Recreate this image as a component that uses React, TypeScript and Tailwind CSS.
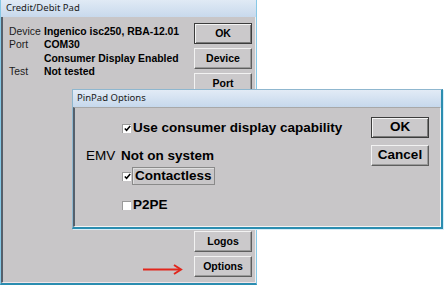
import React from 'react';

const font = { fontFamily: '"Liberation Sans", Arial, sans-serif' };

function Btn({ label, primary, big }: { label: string; primary?: boolean; big?: boolean }) {
  return (
    <div
      className={
        'flex items-center justify-center bg-[#cbc9cb] font-bold text-black ' +
        (big ? 'w-[58px] h-[21px] text-[13.5px] ' : 'w-[58px] h-[21px] text-[10.5px] ') +
        (primary
          ? 'border border-[#3c3c3c] shadow-[inset_1px_1px_0_#f4f4f4,inset_-1px_-1px_0_#7a7a7a]'
          : 'border border-t-[#f2f2f2] border-l-[#f2f2f2] border-r-[#5e5e5e] border-b-[#5e5e5e] shadow-[inset_-1px_-1px_0_#9a9a9a]')
      }
    >
      {label}
    </div>
  );
}

function Check({ checked }: { checked?: boolean }) {
  return (
    <span className="flex items-center justify-center w-[9px] h-[9px] bg-white border-t border-l border-[#9a9a9a] shrink-0">
      {checked && (
        <svg width="7" height="7" viewBox="0 0 7 7">
          <path d="M0.8 3.4 L2.6 5.3 L6.2 1" stroke="#000" strokeWidth="1.5" fill="none" />
        </svg>
      )}
    </span>
  );
}

export default function App() {
  const rows = [
    { label: 'Device', value: 'Ingenico isc250, RBA-12.01' },
    { label: 'Port', value: 'COM30' },
    { label: '', value: 'Consumer Display Enabled' },
    { label: 'Test', value: 'Not tested' },
  ];

  return (
    <div className="relative w-[444px] h-[285px] bg-white overflow-hidden text-black" style={font}>
      {/* Main window */}
      <div className="flex flex-col w-[257px] h-[285px] border-x border-[#86c8e6] border-b-2 border-b-[#2b8db0]">
        <div
          className="h-[17px] shrink-0 flex items-center pl-[5px] text-[9.5px] text-[#1a1a1a] bg-gradient-to-b from-[#e0eaf5] to-[#c8d9ec]"
          style={{ fontFamily: '"Noto Sans", sans-serif' }}
        >
          Credit/Debit Pad
        </div>
        <div className="flex-1 flex bg-[#c8c6c8] border-l-2 border-l-[#55606c] border-r border-r-[#eeeeee] border-b border-b-[#f3e6ea]">
          <div className="flex-1 flex flex-col pt-[8px] pl-[6px]">
            {rows.map((r, i) => (
              <div key={i} className="flex items-center h-[13.5px] text-[10.4px]">
                <span className="w-[35px] text-[#1c1c1c]">{r.label}</span>
                <span className="font-bold">{r.value}</span>
              </div>
            ))}
          </div>
          <div className="flex flex-col gap-[4px] pt-[6px] pb-[5px] pr-[3px]">
            <Btn label="OK" primary />
            <Btn label="Device" />
            <Btn label="Port" />
            <div className="flex-1" />
            <Btn label="Logos" />
            <Btn label="Options" />
          </div>
        </div>
      </div>

      {/* Annotation arrow */}
      <svg className="absolute left-[142px] top-[264px]" width="42" height="11" viewBox="0 0 42 11">
        <path d="M1 5.5 H38" stroke="#e1261c" strokeWidth="2" />
        <path d="M32 1 L39 5.5 L32 10" stroke="#e1261c" strokeWidth="2" fill="none" />
      </svg>

      {/* PinPad Options dialog */}
      <div className="absolute left-[72px] top-[89px] w-[371px] h-[140px] flex flex-col border border-[#8fb7cf] border-r-2 border-r-[#2b8db0] border-b-2 border-b-[#2b8db0] shadow-[1px_1px_0_#d8eef8]">
        <div
          className="h-[17px] shrink-0 flex items-center pl-[4px] text-[9.5px] text-[#1a1a1a] bg-gradient-to-b from-[#e2ebf6] to-[#c6d8ec]"
          style={{ fontFamily: '"Noto Sans", sans-serif' }}
        >
          PinPad Options
        </div>
        <div className="flex-1 flex bg-[#c8c6c8] border-l-2 border-l-[#55606c] border-t border-t-[#a8a8a8] border-r border-r-[#f4f4f4] border-b border-b-[#f4f4f4]">
          <div className="flex-1 flex flex-col pt-[11px] text-[13.5px]">
            <div className="flex items-center h-[18px] pl-[47px] gap-[2px]">
              <Check checked />
              <span className="font-bold">Use consumer display capability</span>
            </div>
            <div className="flex items-center h-[18px] mt-[10px] pl-[11px]">
              <span className="w-[35px]">EMV</span>
              <span className="font-bold">Not on system</span>
            </div>
            <div className="flex items-center h-[18px] mt-[2px] pl-[47px] gap-[1px]">
              <Check checked />
              <span className="font-bold border border-[#8a8a8a] shadow-[inset_1px_1px_0_#dedede] px-[2px] h-[18px] flex items-center">
                Contactless
              </span>
            </div>
            <div className="flex items-center h-[18px] mt-[11px] pl-[47px] gap-[2px]">
              <Check />
              <span className="font-bold">P2PE</span>
            </div>
          </div>
          <div className="flex flex-col gap-[7px] pt-[9px] pr-[11px]">
            <Btn label="OK" primary big />
            <Btn label="Cancel" big />
          </div>
        </div>
      </div>
    </div>
  );
}
